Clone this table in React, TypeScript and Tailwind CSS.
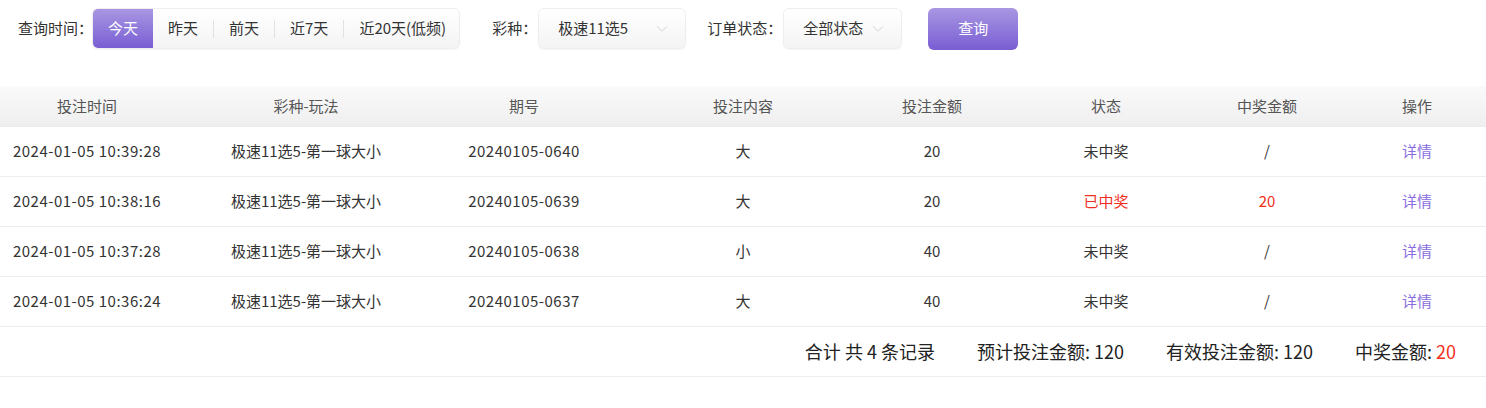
import { ChevronDown } from 'lucide-react';

const font = { fontFamily: '"Noto Sans CJK SC", "Liberation Sans", sans-serif' };

const ranges = ['今天', '昨天', '前天', '近7天', '近20天(低频)'];

const rows = [
  { time: '2024-01-05 10:39:28', game: '极速11选5-第一球大小', issue: '20240105-0640', bet: '大', amount: '20', won: false, prize: '/' },
  { time: '2024-01-05 10:38:16', game: '极速11选5-第一球大小', issue: '20240105-0639', bet: '大', amount: '20', won: true, prize: '20' },
  { time: '2024-01-05 10:37:28', game: '极速11选5-第一球大小', issue: '20240105-0638', bet: '小', amount: '40', won: false, prize: '/' },
  { time: '2024-01-05 10:36:24', game: '极速11选5-第一球大小', issue: '20240105-0637', bet: '大', amount: '40', won: false, prize: '/' },
];

const heads = ['投注时间', '彩种-玩法', '期号', '投注内容', '投注金额', '状态', '中奖金额', '操作'];

// column widths tuned so the text centres line up with the page
const cols = 'grid grid-cols-[174px_264px_172px_266px_112px_236px_86px_176px]';

function Select({ value, width }: { value: string; width: string }) {
  return (
    <div
      className={`${width} h-[41px] flex items-center justify-between pl-[19px] pr-[14px] rounded-[6px] border border-[#eeeeee] bg-gradient-to-b from-white to-[#f4f4f4] shadow-[0_1px_2px_rgba(0,0,0,0.04)] text-[15px] text-[#333]`}
    >
      <span>{value}</span>
      <ChevronDown className="w-[18px] h-[18px] text-[#c4c4cc]" strokeWidth={1} />
    </div>
  );
}

export default function App() {
  return (
    <div style={font} className="w-[1486px] h-[408px] bg-white text-[#333] overflow-hidden">
      <div className="flex items-center h-[57px] pl-[18px]">
        <span className="text-[15px] text-[#333]">查询时间：</span>
        <div className="flex items-center h-[41px] -ml-px rounded-[6px] border border-[#eeeeee] bg-gradient-to-b from-white to-[#f4f4f4] shadow-[0_1px_2px_rgba(0,0,0,0.04)] overflow-hidden">
          {ranges.map((r, i) => (
            <div key={r} className="flex items-center h-full">
              {i > 1 && <div className="w-px h-[18px] bg-[#e2e2e2]" />}
              <div
                className={`h-full flex items-center text-[15px] ${
                  i === 0
                    ? 'bg-gradient-to-b from-[#a996e2] to-[#7a5dd3] text-white w-[60px] justify-center'
                    : i === 4
                      ? 'pl-[15px] pr-[13px] text-[#333]'
                      : 'px-[15px] text-[#333]'
                }`}
              >
                {r}
              </div>
            </div>
          ))}
        </div>

        <span className="ml-[32px] mr-[1px] text-[15px]">彩种：</span>
        <Select value="极速11选5" width="w-[148px]" />

        <span className="ml-[21px] mr-[1px] text-[15px]">订单状态：</span>
        <Select value="全部状态" width="w-[119px]" />

        <button className="ml-[26px] w-[90px] h-[42px] rounded-[6px] bg-gradient-to-b from-[#a996e2] to-[#7a5dd3] text-white text-[15px]">
          查询
        </button>
      </div>

      <div className="mt-[29px]">
        <div className={`${cols} h-[41px] items-center bg-gradient-to-b from-[#fafafa] to-[#efefef] border-b border-[#ebebef] text-[15px] text-[#555]`}>
          {heads.map((h, i) => (
            <div key={h} className={`text-center ${i === 7 ? 'pl-[38px]' : ''}`}>
              {h}
            </div>
          ))}
        </div>

        {rows.map((r) => (
          <div key={r.issue} className={`${cols} h-[50px] items-center border-b border-[#ededf1] text-[15px] text-[#333]`}>
            <div className="text-center tracking-[0.5px]">{r.time}</div>
            <div className="text-center">{r.game}</div>
            <div className="text-center tracking-[0.5px]">{r.issue}</div>
            <div className="text-center">{r.bet}</div>
            <div className="text-center">{r.amount}</div>
            <div className={`text-center ${r.won ? 'text-[#f0301f]' : ''}`}>{r.won ? '已中奖' : '未中奖'}</div>
            <div className={`text-center ${r.won ? 'text-[#f0301f]' : ''}`}>{r.prize}</div>
            <div className="text-center pl-[38px] text-[#8a6ee0]">详情</div>
          </div>
        ))}

        <div className="flex items-center justify-end gap-[42px] h-[50px] pr-[30px] border-b border-[#ededf1] text-[18px] text-[#222]">
          <span>合计 共 4 条记录</span>
          <span>预计投注金额: 120</span>
          <span>有效投注金额: 120</span>
          <span>
            中奖金额: <span className="text-[#f0301f]">20</span>
          </span>
        </div>
      </div>
    </div>
  );
}
